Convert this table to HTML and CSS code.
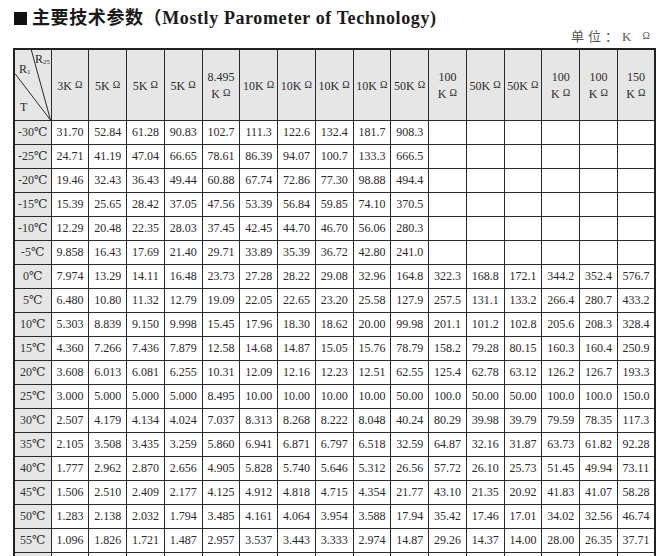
FILE: index.html
```html
<!DOCTYPE html>
<html>
<head>
<meta charset="utf-8">
<link rel="stylesheet" href="styles.css">
</head>
<body>
<div class="page">
  <h1 class="title"><span class="sq"></span>主要技术参数（Mostly Parometer of Technology)</h1>
  <div class="unit">单位：K <span class="om">Ω</span></div>
  <table class="grid">
    <colgroup><col class="c0"><col span="16"></colgroup>
    <thead>
      <tr>
        <th class="diag">
          <div class="diag-box">
            <svg class="diag-lines" width="37" height="71" viewBox="0 0 37 71" preserveAspectRatio="none">
              <line x1="17" y1="0" x2="37" y2="71" stroke="#222" stroke-width="1"/>
              <line x1="0" y1="24" x2="37" y2="71" stroke="#222" stroke-width="1"/>
            </svg>
            <span class="lbl l-r25">R<sub>25</sub></span>
            <span class="lbl l-r1">R<sub>1</sub></span>
            <span class="lbl l-t">T</span>
          </div>
        </th>
        <th>3K <span class="om">Ω</span></th>
        <th>5K <span class="om">Ω</span></th>
        <th>5K <span class="om">Ω</span></th>
        <th>5K <span class="om">Ω</span></th>
        <th>8.495<br>K <span class="om">Ω</span></th>
        <th>10K <span class="om">Ω</span></th>
        <th>10K <span class="om">Ω</span></th>
        <th>10K <span class="om">Ω</span></th>
        <th>10K <span class="om">Ω</span></th>
        <th>50K <span class="om">Ω</span></th>
        <th>100<br>K <span class="om">Ω</span></th>
        <th>50K <span class="om">Ω</span></th>
        <th>50K <span class="om">Ω</span></th>
        <th>100<br>K <span class="om">Ω</span></th>
        <th>100<br>K <span class="om">Ω</span></th>
        <th>150<br>K <span class="om">Ω</span></th>
      </tr>
    </thead>
    <tbody>
      <tr><th>-30℃</th><td>31.70</td><td>52.84</td><td>61.28</td><td>90.83</td><td>102.7</td><td>111.3</td><td>122.6</td><td>132.4</td><td>181.7</td><td>908.3</td><td></td><td></td><td></td><td></td><td></td><td></td></tr>
      <tr><th>-25℃</th><td>24.71</td><td>41.19</td><td>47.04</td><td>66.65</td><td>78.61</td><td>86.39</td><td>94.07</td><td>100.7</td><td>133.3</td><td>666.5</td><td></td><td></td><td></td><td></td><td></td><td></td></tr>
      <tr><th>-20℃</th><td>19.46</td><td>32.43</td><td>36.43</td><td>49.44</td><td>60.88</td><td>67.74</td><td>72.86</td><td>77.30</td><td>98.88</td><td>494.4</td><td></td><td></td><td></td><td></td><td></td><td></td></tr>
      <tr><th>-15℃</th><td>15.39</td><td>25.65</td><td>28.42</td><td>37.05</td><td>47.56</td><td>53.39</td><td>56.84</td><td>59.85</td><td>74.10</td><td>370.5</td><td></td><td></td><td></td><td></td><td></td><td></td></tr>
      <tr><th>-10℃</th><td>12.29</td><td>20.48</td><td>22.35</td><td>28.03</td><td>37.45</td><td>42.45</td><td>44.70</td><td>46.70</td><td>56.06</td><td>280.3</td><td></td><td></td><td></td><td></td><td></td><td></td></tr>
      <tr><th>-5℃</th><td>9.858</td><td>16.43</td><td>17.69</td><td>21.40</td><td>29.71</td><td>33.89</td><td>35.39</td><td>36.72</td><td>42.80</td><td>241.0</td><td></td><td></td><td></td><td></td><td></td><td></td></tr>
      <tr><th>0℃</th><td>7.974</td><td>13.29</td><td>14.11</td><td>16.48</td><td>23.73</td><td>27.28</td><td>28.22</td><td>29.08</td><td>32.96</td><td>164.8</td><td>322.3</td><td>168.8</td><td>172.1</td><td>344.2</td><td>352.4</td><td>576.7</td></tr>
      <tr><th>5℃</th><td>6.480</td><td>10.80</td><td>11.32</td><td>12.79</td><td>19.09</td><td>22.05</td><td>22.65</td><td>23.20</td><td>25.58</td><td>127.9</td><td>257.5</td><td>131.1</td><td>133.2</td><td>266.4</td><td>280.7</td><td>433.2</td></tr>
      <tr><th>10℃</th><td>5.303</td><td>8.839</td><td>9.150</td><td>9.998</td><td>15.45</td><td>17.96</td><td>18.30</td><td>18.62</td><td>20.00</td><td>99.98</td><td>201.1</td><td>101.2</td><td>102.8</td><td>205.6</td><td>208.3</td><td>328.4</td></tr>
      <tr><th>15℃</th><td>4.360</td><td>7.266</td><td>7.436</td><td>7.879</td><td>12.58</td><td>14.68</td><td>14.87</td><td>15.05</td><td>15.76</td><td>78.79</td><td>158.2</td><td>79.28</td><td>80.15</td><td>160.3</td><td>160.4</td><td>250.9</td></tr>
      <tr><th>20℃</th><td>3.608</td><td>6.013</td><td>6.081</td><td>6.255</td><td>10.31</td><td>12.09</td><td>12.16</td><td>12.23</td><td>12.51</td><td>62.55</td><td>125.4</td><td>62.78</td><td>63.12</td><td>126.2</td><td>126.7</td><td>193.3</td></tr>
      <tr><th>25℃</th><td>3.000</td><td>5.000</td><td>5.000</td><td>5.000</td><td>8.495</td><td>10.00</td><td>10.00</td><td>10.00</td><td>10.00</td><td>50.00</td><td>100.0</td><td>50.00</td><td>50.00</td><td>100.0</td><td>100.0</td><td>150.0</td></tr>
      <tr><th>30℃</th><td>2.507</td><td>4.179</td><td>4.134</td><td>4.024</td><td>7.037</td><td>8.313</td><td>8.268</td><td>8.222</td><td>8.048</td><td>40.24</td><td>80.29</td><td>39.98</td><td>39.79</td><td>79.59</td><td>78.35</td><td>117.3</td></tr>
      <tr><th>35℃</th><td>2.105</td><td>3.508</td><td>3.435</td><td>3.259</td><td>5.860</td><td>6.941</td><td>6.871</td><td>6.797</td><td>6.518</td><td>32.59</td><td>64.87</td><td>32.16</td><td>31.87</td><td>63.73</td><td>61.82</td><td>92.28</td></tr>
      <tr><th>40℃</th><td>1.777</td><td>2.962</td><td>2.870</td><td>2.656</td><td>4.905</td><td>5.828</td><td>5.740</td><td>5.646</td><td>5.312</td><td>26.56</td><td>57.72</td><td>26.10</td><td>25.73</td><td>51.45</td><td>49.94</td><td>73.11</td></tr>
      <tr><th>45℃</th><td>1.506</td><td>2.510</td><td>2.409</td><td>2.177</td><td>4.125</td><td>4.912</td><td>4.818</td><td>4.715</td><td>4.354</td><td>21.77</td><td>43.10</td><td>21.35</td><td>20.92</td><td>41.83</td><td>41.07</td><td>58.28</td></tr>
      <tr><th>50℃</th><td>1.283</td><td>2.138</td><td>2.032</td><td>1.794</td><td>3.485</td><td>4.161</td><td>4.064</td><td>3.954</td><td>3.588</td><td>17.94</td><td>35.42</td><td>17.46</td><td>17.01</td><td>34.02</td><td>32.56</td><td>46.74</td></tr>
      <tr><th>55℃</th><td>1.096</td><td>1.826</td><td>1.721</td><td>1.487</td><td>2.957</td><td>3.537</td><td>3.443</td><td>3.333</td><td>2.974</td><td>14.87</td><td>29.26</td><td>14.37</td><td>14.00</td><td>28.00</td><td>26.35</td><td>37.71</td></tr>
      <tr><th></th><td></td><td></td><td></td><td></td><td></td><td></td><td></td><td></td><td></td><td></td><td></td><td></td><td></td><td></td><td></td><td></td></tr>
    </tbody>
  </table>
</div>
</body>
</html>
```

FILE: styles.css
```css
html, body {
  margin: 0;
  padding: 0;
  background: #fff;
  overflow: hidden;
}
.page {
  padding: 8px 0 0 13px;
  width: 643px;
  font-family: "Liberation Serif", "Noto Sans CJK SC", serif;
  color: #2a2a2a;
}
.title {
  margin: 0;
  font-size: 18px;
  line-height: 20px;
  font-weight: bold;
  letter-spacing: 0.6px;
  color: #1a1a1a;
  display: flex;
  align-items: center;
}
.sq {
  display: inline-block;
  width: 13px;
  height: 13px;
  background: #111;
  margin: 0 5px 0 1px;
}
.unit {
  text-align: right;
  font-size: 13px;
  line-height: 16px;
  margin-top: 0;
  color: #555;
  letter-spacing: 4px;
  margin-right: 2px;
}
.om {
  font-size: 10px;
  vertical-align: 2px;
}
.grid {
  margin-top: 3px;
  width: 643px;
  table-layout: fixed;
  border-collapse: collapse;
  border: 2px solid #222;
  font-size: 12px;
}
.c0 { width: 37px; }
.grid th, .grid td {
  border: 1px solid #2a2a2a;
  padding: 0;
  text-align: center;
  font-weight: normal;
  white-space: nowrap;
  overflow: hidden;
}
.grid thead th {
  height: 70px;
  background: #e6e6e6;
  line-height: 16px;
}
.grid tbody tr { height: 24px; }
.grid tbody th {
  background: #e6e6e6;
  color: #333;
  font-family: "Liberation Serif", "DejaVu Serif", "Noto Sans CJK SC", serif;
}
.grid td { background: #fff; }
.diag { position: relative; }
.diag-box {
  position: relative;
  height: 70px;
}
.diag-lines {
  position: absolute;
  left: 0;
  top: 0;
  width: 100%;
  height: 100%;
}
.lbl {
  position: absolute;
  font-size: 12px;
  line-height: 12px;
}
.lbl sub { font-size: 7px; vertical-align: -1px; }
.l-r25 { left: 20px; top: 3px; }
.l-r1 { left: 4px; top: 13px; }
.l-t { left: 5px; top: 51px; }
```
